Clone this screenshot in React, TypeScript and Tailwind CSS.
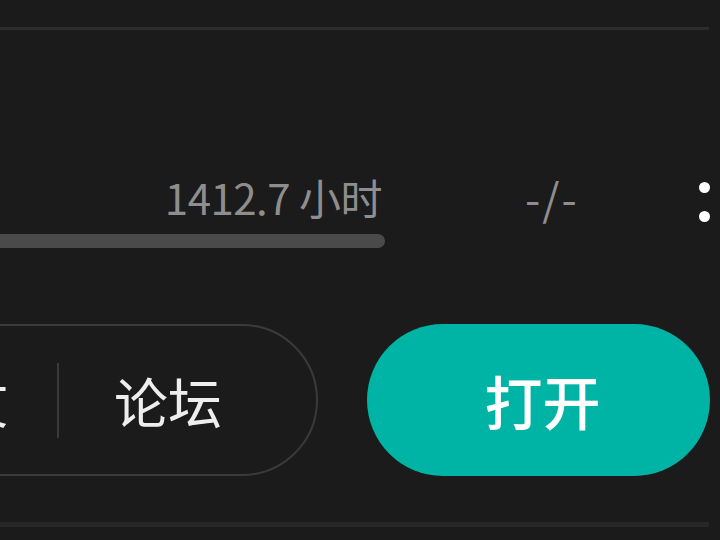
export default function App() {
  return (
    <div className="w-[720px] h-[540px] overflow-hidden bg-[#1b1b1b] font-['Noto_Sans_CJK_SC',sans-serif]">
      {/* top divider */}
      <div className="pt-[27px]">
        <div className="h-[3px] w-[709px] bg-[#2c2c2c]" />
      </div>

      {/* stats row */}
      <div className="mt-[144px] flex items-start">
        <div className="flex w-[385px] flex-col items-end">
          <div className="pr-[3px] text-[42px] leading-[46px] tracking-[-0.5px] text-[#8e8e8e]">1412.7 小时</div>
          <div className="mt-[14px] h-[14px] w-full rounded-r-full bg-[#4a4a4a]" />
        </div>
        <div className="ml-[140px] text-[44px] leading-[46px] tracking-[2px] text-[#8e8e8e]">-/-</div>
        <div className="ml-[120px] mt-[8px] flex flex-col gap-[18px]">
          <span className="h-[11px] w-[11px] rounded-full bg-white" />
          <span className="h-[11px] w-[11px] rounded-full bg-white" />
        </div>
      </div>

      {/* buttons row */}
      <div className="mt-[76px] flex items-center">
        <div className="-ml-[200px] flex h-[152px] w-[518px] items-center rounded-full border-2 border-[#3a3a3a] pr-[94px]">
          <span className="ml-auto text-[54px] text-[#eeeeee]">图文</span>
          <span className="ml-[49px] h-[75px] w-[2px] bg-[#3a3a3a]" />
          <span className="ml-[55px] text-[54px] text-[#eeeeee]">论坛</span>
        </div>
        <button className="ml-[49px] flex h-[152px] w-[343px] items-center justify-center rounded-full bg-[#00b4a5] pl-[8px] text-[58px] font-medium text-white">
          打开
        </button>
      </div>

      {/* bottom divider */}
      <div className="mt-[46px] h-[5px] w-[709px] bg-[#272727]" />
    </div>
  )
}
